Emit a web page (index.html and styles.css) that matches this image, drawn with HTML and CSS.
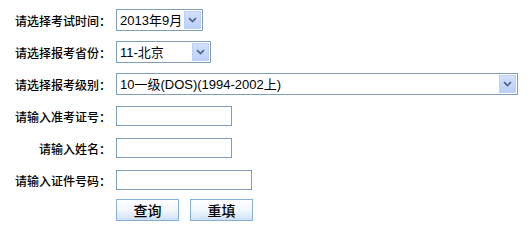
FILE: index.html
```html
<!DOCTYPE html>
<html>
    <head>
        <title>成绩查询</title>
        <link rel="stylesheet" href="styles.css">
    </head>
    <body>
        <div class="query-form">
            <div class="form-row">
                <div class="label-cell">请选择考试时间：</div>
                <div class="select-box time-select">
                    <select><option>2013年9月</option></select>
                    <span class="arrow"><svg width="9" height="6" viewBox="0 0 9 6"><polyline points="1,1 4.5,4.5 8,1" fill="none" stroke="#4d6185" stroke-width="1.7"/></svg></span>
                </div>
            </div>
            <div class="form-row">
                <div class="label-cell">请选择报考省份：</div>
                <div class="select-box province-select">
                    <select><option>11-北京</option></select>
                    <span class="arrow"><svg width="9" height="6" viewBox="0 0 9 6"><polyline points="1,1 4.5,4.5 8,1" fill="none" stroke="#4d6185" stroke-width="1.7"/></svg></span>
                </div>
            </div>
            <div class="form-row">
                <div class="label-cell">请选择报考级别：</div>
                <div class="select-box level-select">
                    <select><option>10一级(DOS)(1994-2002上)</option></select>
                    <span class="arrow"><svg width="9" height="6" viewBox="0 0 9 6"><polyline points="1,1 4.5,4.5 8,1" fill="none" stroke="#4d6185" stroke-width="1.7"/></svg></span>
                </div>
            </div>
            <div class="form-row">
                <div class="label-cell">请输入准考证号：</div>
                <input type="text" class="text-input">
            </div>
            <div class="form-row">
                <div class="label-cell">请输入姓名：</div>
                <input type="text" class="text-input">
            </div>
            <div class="form-row">
                <div class="label-cell">请输入证件号码：</div>
                <input type="text" class="text-input long-input">
            </div>
            <div class="form-row button-row">
                <div class="label-cell"></div>
                <button class="form-btn">查询</button>
                <button class="form-btn">重填</button>
            </div>
        </div>
    </body>
</html>
```

FILE: styles.css
```css
body {
    margin: 0;
    background-color: #ffffff;
    font-family: "Liberation Sans", "Noto Sans CJK SC", sans-serif;
    color: #000000;
}
.query-form {
    padding-top: 4px;
}
.form-row {
    display: flex;
    align-items: center;
    height: 32px;
}
.button-row {
    height: 28px;
}
.label-cell {
    width: 111px;
    padding-right: 5px;
    text-align: right;
    font-size: 12px;
    font-weight: 500;
    font-family: "Noto Sans CJK SC", sans-serif;
    white-space: nowrap;
    flex-shrink: 0;
}
.select-box {
    position: relative;
    height: 22px;
    box-sizing: border-box;
    border: 1px solid #7f9db9;
    background-color: #ffffff;
}
.select-box select {
    appearance: none;
    -webkit-appearance: none;
    border: none;
    outline: none;
    background: transparent;
    width: 100%;
    height: 20px;
    margin: 0;
    padding: 0 0 0 3px;
    font-size: 13px;
    font-family: "Liberation Sans", "Noto Sans CJK SC", sans-serif;
    color: #000000;
}
.time-select {
    width: 87px;
}
.province-select {
    width: 95px;
}
.level-select {
    width: 402px;
}
.arrow {
    position: absolute;
    top: 1px;
    right: 1px;
    width: 15px;
    height: 16px;
    border: 1px solid #bccff7;
    background: linear-gradient(#d3e0fd, #bccff8);
    display: flex;
    align-items: center;
    justify-content: center;
    pointer-events: none;
}
.text-input {
    width: 116px;
    height: 20px;
    box-sizing: border-box;
    border: 1px solid #7f9db9;
    margin: 0;
    padding: 0 3px;
    font-size: 12px;
}
.long-input {
    width: 136px;
}
.form-btn {
    width: 63px;
    height: 22px;
    box-sizing: border-box;
    border: 1px solid #86aedb;
    background: linear-gradient(#ffffff, #f3f8fd 50%, #cfe0f5);
    font-size: 14px;
    font-weight: 500;
    font-family: "Noto Sans CJK SC", sans-serif;
    color: #000000;
    padding: 0;
    margin: 0 11px 0 0;
    line-height: 18px;
}
```
